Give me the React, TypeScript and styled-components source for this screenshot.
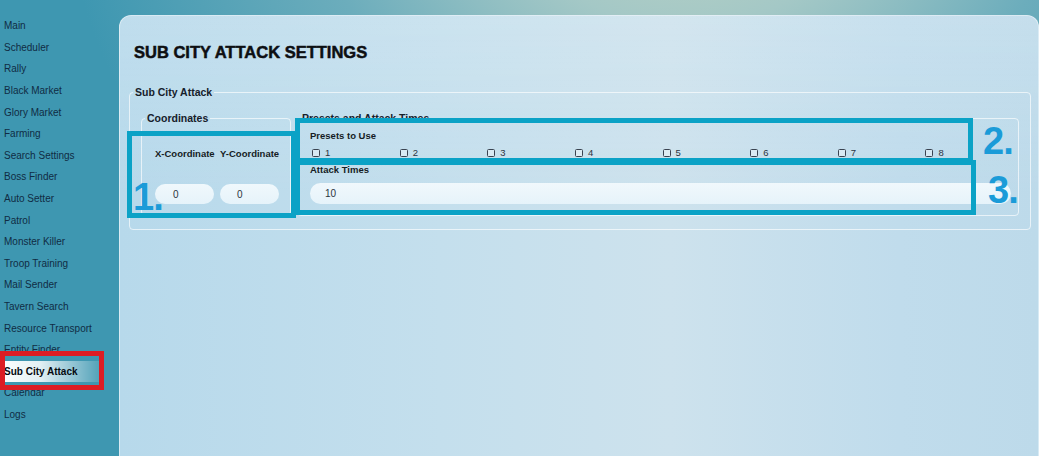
import styled, { createGlobalStyle } from 'styled-components'

const GlobalStyle = createGlobalStyle`
  html, body {
    margin: 0;
    padding: 0;
    height: 100%;
  }
  body {
    font-family: 'Liberation Sans', Arial, sans-serif;
    overflow: hidden;
  }
  #root {
    height: 100%;
  }
`

const Shell = styled.div`
  position: relative;
  display: flex;
  height: 100vh;
  background: radial-gradient(ellipse 60% 120% at 66% -30%, #c7d8c3 0%, #a4c8c6 30%, #6cadbc 60%, #3e97b1 100%);
`

const Sidebar = styled.nav`
  width: 119px;
  flex: none;
  padding-top: 15px;
  box-sizing: border-box;
`

const NavItem = styled.div<{ $active?: boolean }>`
  width: 100px;
  height: 21.6px;
  display: flex;
  align-items: center;
  padding-left: 4px;
  box-sizing: border-box;
  font-size: 10px;
  color: ${(p) => (p.$active ? '#050a10' : '#102c44')};
  font-weight: ${(p) => (p.$active ? 700 : 400)};
  background: ${(p) =>
    p.$active
      ? 'linear-gradient(90deg, #ffffff 0%, rgba(255,255,255,0.85) 40%, rgba(255,255,255,0.1) 100%)'
      : 'transparent'};
`

const Panel = styled.main`
  flex: 1;
  margin-top: 15px;
  padding: 26px 7px 0 9px;
  border-radius: 12px 12px 0 0;
  border: 1px solid rgba(255, 255, 255, 0.45);
  border-bottom: none;
  background:
    linear-gradient(180deg, rgba(255,255,255,0.12) 0%, rgba(255,255,255,0) 40%),
    linear-gradient(90deg, #b7d9eb 0%, #c4dfed 35%, #cde2ed 60%, #c0dcec 85%, #bddaea 100%);
  box-sizing: border-box;
`

const Title = styled.h1`
  margin: 0 0 24px 5px;
  font-size: 16.5px;
  line-height: 20px;
  font-weight: 700;
  color: #0d0f12;
  -webkit-text-stroke: 0.5px #0d0f12;
`

const Group = styled.fieldset<{ $pad: string }>`
  margin: 0;
  min-width: 0;
  padding: ${(p) => p.$pad};
  border: 1px solid rgba(255, 255, 255, 0.65);
  border-radius: 4px;
  box-sizing: border-box;
`

const Legend = styled.legend`
  padding: 0 2px;
  font-size: 10.5px;
  line-height: 12px;
  font-weight: 700;
  color: #16202a;
`

const Columns = styled.div`
  display: flex;
  gap: 6px;
  margin-left: 8px;
`

const CoordGrid = styled.div`
  display: grid;
  grid-template-columns: 59px 59px;
  column-gap: 6px;
  margin-left: 10px;
`

const FieldLabel = styled.div<{ $gap?: number }>`
  font-size: 9.5px;
  line-height: 12px;
  font-weight: 700;
  color: #151c24;
  white-space: nowrap;
  margin-top: ${(p) => p.$gap ?? 0}px;
`

const Pill = styled.div<{ $h: number; $gap: number; $indent: number }>`
  height: ${(p) => p.$h}px;
  margin-top: ${(p) => p.$gap}px;
  padding-left: ${(p) => p.$indent}px;
  border-radius: ${(p) => p.$h / 2}px;
  background: linear-gradient(180deg, #f0f8fc 0%, #e6f3fa 100%);
  display: flex;
  align-items: center;
  font-size: 10px;
  color: #2b3440;
  box-sizing: border-box;
`

const PresetsBody = styled.div`
  margin-left: 10px;
`

const CheckRow = styled.div`
  display: grid;
  grid-template-columns: repeat(8, 1fr);
  height: 12px;
  margin-top: 5px;
  margin-bottom: 1px;
`

const CheckItem = styled.label`
  display: flex;
  align-items: center;
  gap: 5px;
  padding-left: 2px;
  font-size: 9.5px;
  line-height: 10px;
  color: #2b3440;
`

const Box = styled.span`
  width: 8px;
  height: 8px;
  border: 1px solid #3a4350;
  border-radius: 1.5px;
  background: rgba(255, 255, 255, 0.35);
  box-sizing: border-box;
`

const Frame = styled.div<{ $x: number; $y: number; $w: number; $h: number; $red?: boolean }>`
  position: absolute;
  left: ${(p) => p.$x}px;
  top: ${(p) => p.$y}px;
  width: ${(p) => p.$w}px;
  height: ${(p) => p.$h}px;
  border: 5px solid ${(p) => (p.$red ? '#dc1d24' : '#0ba2c6')};
  box-sizing: border-box;
  pointer-events: none;
`

const Marker = styled.div<{ $x: number; $y: number }>`
  position: absolute;
  left: ${(p) => p.$x}px;
  top: ${(p) => p.$y}px;
  font-size: 38px;
  line-height: 1;
  font-weight: 700;
  color: #1b9bd8;
  letter-spacing: -1px;
  pointer-events: none;
`

const navItems = [
  'Main',
  'Scheduler',
  'Rally',
  'Black Market',
  'Glory Market',
  'Farming',
  'Search Settings',
  'Boss Finder',
  'Auto Setter',
  'Patrol',
  'Monster Killer',
  'Troop Training',
  'Mail Sender',
  'Tavern Search',
  'Resource Transport',
  'Entity Finder',
  'Sub City Attack',
  'Calendar',
  'Logs',
]

const presets = [1, 2, 3, 4, 5, 6, 7, 8]

export default function App() {
  return (
    <Shell>
      <GlobalStyle />
      <Sidebar>
        {navItems.map((item) => (
          <NavItem key={item} $active={item === 'Sub City Attack'}>
            {item}
          </NavItem>
        ))}
      </Sidebar>

      <Panel>
        <Title>SUB CITY ATTACK SETTINGS</Title>
        <Group $pad="14px 11px 13px 3px">
          <Legend>Sub City Attack</Legend>
          <Columns>
            <Group $pad="24px 12px 11px 3px" style={{ width: 150 }}>
              <Legend>Coordinates</Legend>
              <CoordGrid>
                <FieldLabel>X-Coordinate</FieldLabel>
                <FieldLabel>Y-Coordinate</FieldLabel>
                <Pill $h={20} $gap={24} $indent={18}>0</Pill>
                <Pill $h={20} $gap={24} $indent={17}>0</Pill>
              </CoordGrid>
            </Group>
            <Group $pad="6px 7px 11px 2px" style={{ flex: 1 }}>
              <Legend>Presets and Attack Times</Legend>
              <PresetsBody>
                <FieldLabel>Presets to Use</FieldLabel>
                <CheckRow>
                  {presets.map((n) => (
                    <CheckItem key={n}>
                      <Box />
                      {n}
                    </CheckItem>
                  ))}
                </CheckRow>
                <FieldLabel $gap={5}>Attack Times</FieldLabel>
                <Pill $h={21} $gap={7} $indent={15}>10</Pill>
              </PresetsBody>
            </Group>
          </Columns>
        </Group>
      </Panel>

      <Frame $x={0} $y={351} $w={104} $h={39} $red />
      <Frame $x={127} $y={131} $w={169} $h={87} />
      <Frame $x={295} $y={118} $w={678} $h={45} />
      <Frame $x={295} $y={160} $w={681} $h={55} />
      <Marker $x={133} $y={178}>1.</Marker>
      <Marker $x={983} $y={122}>2.</Marker>
      <Marker $x={988} $y={171}>3.</Marker>
    </Shell>
  )
}
